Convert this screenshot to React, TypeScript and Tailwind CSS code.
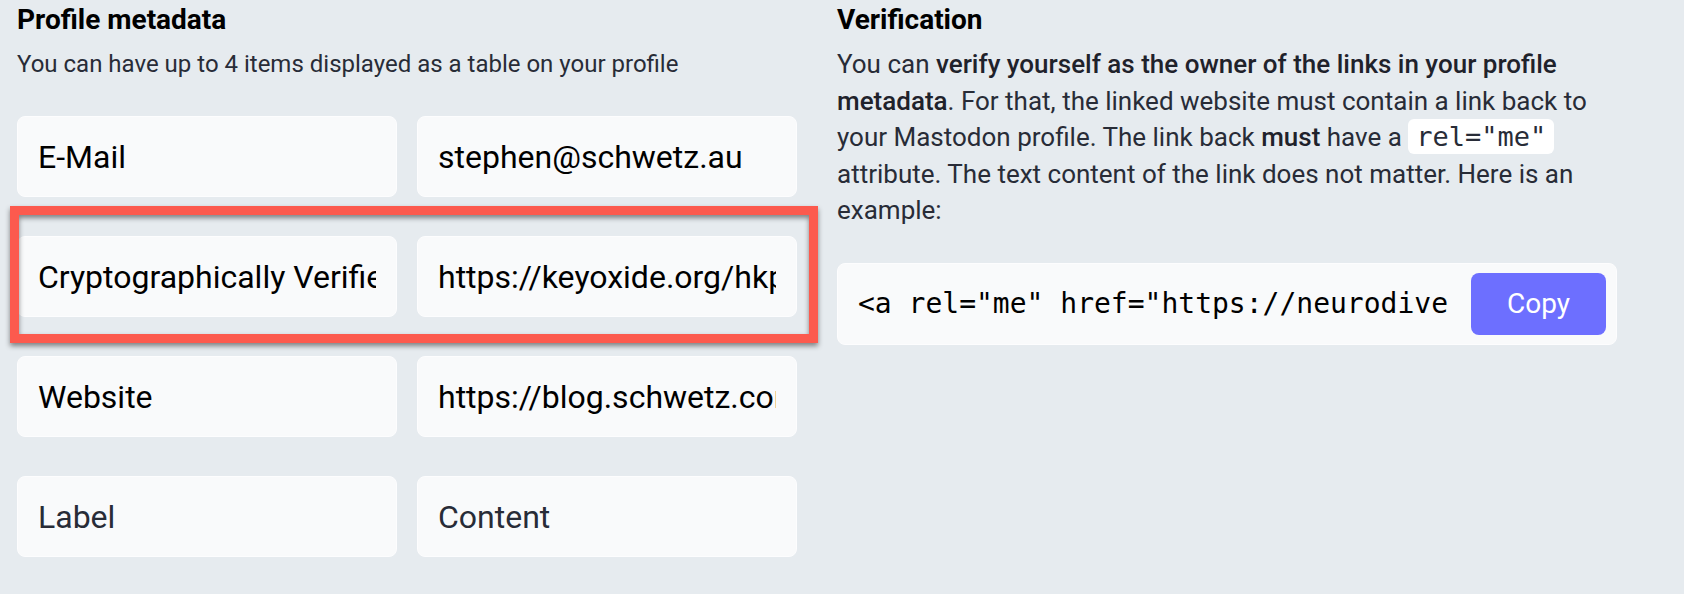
import clsx from 'clsx'

interface Field {
  label: string
  value: string
  placeholder?: boolean
  highlighted?: boolean
}

const FIELDS: Field[] = [
  { label: 'E-Mail', value: 'stephen@schwetz.au' },
  { label: 'Cryptographically Verified', value: 'https://keyoxide.org/hkp/stephen@schwetz.au', highlighted: true },
  { label: 'Website', value: 'https://blog.schwetz.com.au' },
  { label: 'Label', value: 'Content', placeholder: true },
]

function TextBox({ text, placeholder }: { text: string; placeholder?: boolean }) {
  return (
    <div className="h-[81px] rounded-[8px] bg-[#f9fafb] border border-[#fdfdfe] px-[20px] flex items-center">
      <span
        className={clsx(
          'block w-full overflow-hidden whitespace-nowrap text-[32px] leading-[40px]',
          placeholder ? 'text-[#282c37]' : 'text-black'
        )}
      >
        {text}
      </span>
    </div>
  )
}

function FieldRow({ field }: { field: Field }) {
  return (
    <div className="relative grid grid-cols-2 gap-[20px]">
      <TextBox text={field.label} placeholder={field.placeholder} />
      <TextBox text={field.value} placeholder={field.placeholder} />
      {field.highlighted && (
        <div className="absolute -left-[7px] -right-[21px] -top-[30px] -bottom-[26px] border-[9px] border-[#fc5a4e] shadow-[0_3px_5px_rgba(0,0,0,0.45),inset_0_3px_5px_rgba(0,0,0,0.45)] pointer-events-none" />
      )}
    </div>
  )
}

function ProfileMetadata() {
  return (
    <section className="w-[780px]">
      <h2 className="text-[28px] leading-[39px] font-bold text-black">Profile metadata</h2>
      <p className="mt-[7px] text-[24px] leading-[36px] text-[#282c37]">
        You can have up to 4 items displayed as a table on your profile
      </p>
      <div className="mt-[34px] flex flex-col gap-[39px]">
        {FIELDS.map((f) => (
          <FieldRow key={f.label} field={f} />
        ))}
      </div>
    </section>
  )
}

function Verification() {
  return (
    <section className="w-[780px]">
      <h2 className="text-[28px] leading-[39px] font-bold text-black">Verification</h2>
      <p className="mt-[7px] text-[26px] leading-[36.5px] text-[#282c37]">
        You can <strong className="font-medium text-[#1f222b]">verify yourself as the owner of the links in your profile metadata</strong>.
        For that, the linked website must contain a link back to your Mastodon profile. The link back{' '}
        <strong className="font-medium text-[#1f222b]">must</strong> have a{' '}
        <code className="bg-white rounded-[6px] px-[8px] py-[2px] text-[27px] font-['DejaVu_Sans_Mono',monospace] text-[#282c37]">
          rel="me"
        </code>{' '}
        attribute. The text content of the link does not matter. Here is an example:
      </p>
      <div className="mt-[34px] h-[82px] rounded-[8px] bg-[#f9fafb] border border-[#fdfdfe] p-[10px] flex items-center">
        <span className="flex-1 min-w-0 overflow-hidden whitespace-nowrap pl-[10px] mr-[22px] text-[28px] font-['DejaVu_Sans_Mono',monospace] text-black">
          {'<a rel="me" href="https://neurodiversity.social/@stephen">Mastodon</a>'}
        </span>
        <button className="h-[62px] w-[135px] shrink-0 rounded-[8px] bg-[#6d6fff] text-white text-[28px]">
          Copy
        </button>
      </div>
    </section>
  )
}

export default function App() {
  return (
    <div className="min-h-screen bg-[#e6ebef] font-['Roboto',sans-serif]">
      <div className="flex gap-[40px] pl-[17px]">
        <ProfileMetadata />
        <Verification />
      </div>
    </div>
  )
}
